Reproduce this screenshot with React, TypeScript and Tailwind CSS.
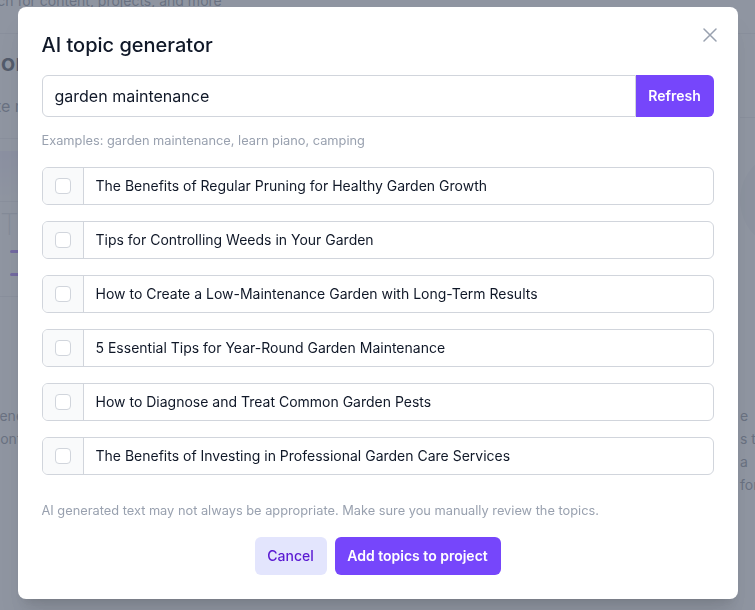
import { useState } from "react"

const TOPICS = [
  "The Benefits of Regular Pruning for Healthy Garden Growth",
  "Tips for Controlling Weeds in Your Garden",
  "How to Create a Low-Maintenance Garden with Long-Term Results",
  "5 Essential Tips for Year-Round Garden Maintenance",
  "How to Diagnose and Treat Common Garden Pests",
  "The Benefits of Investing in Professional Garden Care Services",
]

// page that sits behind the dialog, only its edges show
function Backdrop() {
  return (
    <div className="min-h-screen bg-white overflow-hidden text-gray-500">
      <div className="h-[34px] border-b border-gray-200 overflow-hidden">
        <p className="-mt-[9px] -ml-[33px] text-sm whitespace-nowrap">Search for content, projects, and more</p>
      </div>
      <div className="flex justify-between">
        {/* left column */}
        <div className="w-[120px]">
          <div className="pt-[13px] pb-[20px] border-b border-gray-200">
            <h1 className="-ml-[17px] text-2xl leading-8 font-semibold text-gray-900 whitespace-nowrap">Content</h1>
            <p className="-ml-[40px] mt-[15px] text-base leading-6 whitespace-nowrap">Create more</p>
          </div>
          <div className="h-[63px] border-b border-gray-200 flex items-end">
            <div className="h-[50px] w-[70px] bg-gradient-to-b from-violet-100 to-white rounded-tr-[50px]" />
          </div>
          <div className="h-[95px] border-b border-gray-200 flex flex-col">
            <div className="mt-[4px] text-3xl leading-9 font-extralight text-gray-300">T</div>
            <div className="mt-[8px] ml-[10px] h-[3px] w-[10px] rounded bg-violet-500" />
            <div className="mt-[20px] ml-[10px] h-[3px] w-[10px] rounded bg-violet-500" />
          </div>
          <div className="mt-[107px] text-sm leading-[23px]">
            <p className="-ml-[11px]">Generate</p>
            <p className="-ml-[10px]">Content</p>
          </div>
        </div>

        {/* right column */}
        <div className="w-[15px]">
          <div className="h-[84px] border-b border-gray-200 w-[15px]" />
          <div className="mt-[32px] w-[100px] h-[100px] rounded-full bg-gray-100" />
          <div className="mt-[154px] w-[40px] text-sm leading-[23px] whitespace-nowrap">
            <p>e</p>
            <p>s to</p>
            <p>a</p>
            <p>for</p>
          </div>
        </div>
      </div>
    </div>
  )
}

export default function App() {
  const [query, setQuery] = useState("garden maintenance")
  const [checked, setChecked] = useState<boolean[]>(TOPICS.map(() => false))

  return (
    <div className="relative font-['Inter',sans-serif]">
      <Backdrop />

      <div className="fixed inset-0 bg-gray-500/75 flex justify-center items-start pt-[7px]">
        <div className="relative w-[720px] bg-white rounded-lg shadow-xl p-6">
          <button className="absolute top-[21px] right-[21px] text-gray-400">
            <svg width="14" height="14" viewBox="0 0 14 14" fill="none" stroke="currentColor" strokeWidth="1.5" strokeLinecap="round">
              <path d="M1 1l12 12M13 1L1 13" />
            </svg>
          </button>

          <h2 className="text-xl leading-7 font-medium text-gray-900">AI topic generator</h2>

          <div className="mt-4 flex">
            <input
              value={query}
              onChange={(e) => setQuery(e.target.value)}
              className="flex-1 min-w-0 border border-gray-300 rounded-l-md px-3 py-2 text-base leading-6 text-gray-900 outline-none"
            />
            <button className="w-[78px] h-[42px] rounded-r-md bg-[#7646fb] text-white text-sm font-semibold">
              Refresh
            </button>
          </div>

          <p className="mt-3.5 text-[12.8px] leading-5 text-gray-400">
            Examples: garden maintenance, learn piano, camping
          </p>

          <div className="mt-4 flex flex-col gap-4">
            {TOPICS.map((t, i) => (
              <label key={t} className="flex h-[38px] border border-gray-300 rounded-md overflow-hidden cursor-pointer">
                <span className="w-[41px] shrink-0 bg-gray-50 border-r border-gray-300 flex items-center justify-center">
                  <input
                    type="checkbox"
                    checked={checked[i]}
                    onChange={() => setChecked((c) => c.map((v, j) => (j === i ? !v : v)))}
                    className="appearance-none w-4 h-4 rounded-[4px] border border-gray-300 bg-white checked:bg-[#7646fb] checked:border-[#7646fb]"
                  />
                </span>
                <span className="flex items-center pl-3 text-sm text-gray-900">{t}</span>
              </label>
            ))}
          </div>

          <p className="mt-[26px] text-[12.8px] leading-5 text-gray-400">
            AI generated text may not always be appropriate. Make sure you manually review the topics.
          </p>

          <div className="mt-4 flex justify-center gap-2">
            <button className="h-[38px] w-[72px] rounded-md bg-[#e3e5fd] text-[#5a19d2] text-sm font-medium">
              Cancel
            </button>
            <button className="h-[38px] w-[166px] rounded-md bg-[#7646fb] text-white text-sm font-semibold">
              Add topics to project
            </button>
          </div>
        </div>
      </div>
    </div>
  )
}
